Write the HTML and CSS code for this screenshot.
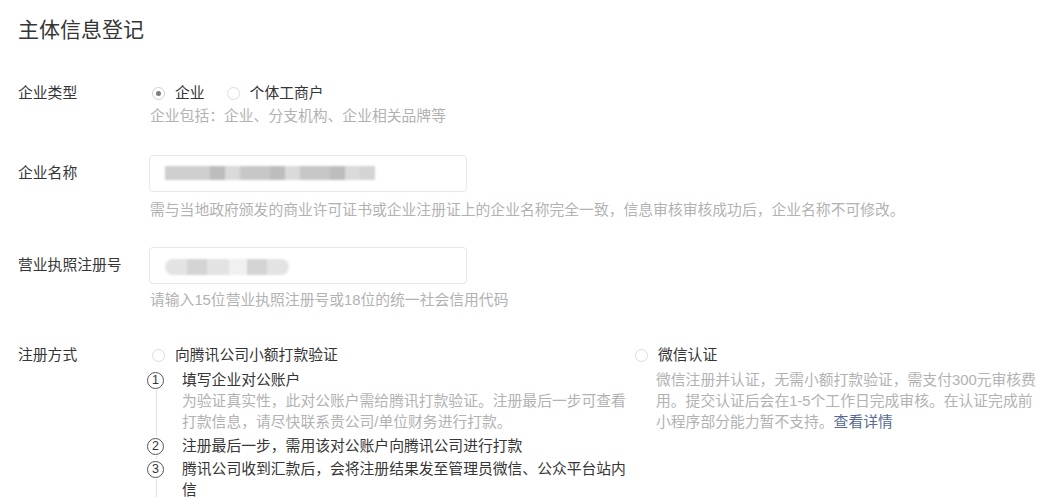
FILE: index.html
```html
<!DOCTYPE html>
<html lang="zh-CN">
<head>
<meta charset="utf-8">
<title>主体信息登记</title>
<link rel="stylesheet" href="styles.css">
</head>
<body>
<div class="page">
  <h1 class="title">主体信息登记</h1>
  <div class="form">
    <div class="row row-type">
      <div class="label">企业类型</div>
      <div class="field">
        <div class="radios">
          <span class="radio checked"><span class="dot"></span>企业</span>
          <span class="radio"><span class="dot"></span>个体工商户</span>
        </div>
        <p class="hint">企业包括：企业、分支机构、企业相关品牌等</p>
      </div>
    </div>

    <div class="row row-name">
      <div class="label label-input">企业名称</div>
      <div class="field">
        <div class="input">
          <div class="mask mask-name">
            <span class="m1"></span><span class="m2"></span><span class="m3"></span><span class="m4"></span><span class="m2"></span><span class="m3"></span><span class="m4"></span><span class="m2"></span><span class="m3"></span><span class="m1"></span>
          </div>
        </div>
        <p class="hint hint-input">需与当地政府颁发的商业许可证书或企业注册证上的企业名称完全一致，信息审核审核成功后，企业名称不可修改。</p>
      </div>
    </div>

    <div class="row row-license">
      <div class="label label-input">营业执照注册号</div>
      <div class="field">
        <div class="input">
          <div class="mask mask-license">
            <span class="l1"></span><span class="l2"></span><span class="l1"></span><span class="l3"></span><span class="l2"></span><span class="l1"></span>
          </div>
        </div>
        <p class="hint hint-input hint-license">请输入15位营业执照注册号或18位的统一社会信用代码</p>
      </div>
    </div>

    <div class="row row-method">
      <div class="label">注册方式</div>
      <div class="field methods">
        <div class="method method-bank">
          <span class="radio"><span class="dot"></span>向腾讯公司小额打款验证</span>
          <ol class="steps">
            <li class="step">
              <div class="marker"><span class="num">1</span><span class="line"></span></div>
              <div class="step-body">
                <div class="step-title">填写企业对公账户</div>
                <div class="step-desc">为验证真实性，此对公账户需给腾讯打款验证。注册最后一步可查看打款信息，请尽快联系贵公司/单位财务进行打款。</div>
              </div>
            </li>
            <li class="step">
              <div class="marker"><span class="num">2</span><span class="line"></span></div>
              <div class="step-body">
                <div class="step-title">注册最后一步，需用该对公账户向腾讯公司进行打款</div>
              </div>
            </li>
            <li class="step">
              <div class="marker"><span class="num">3</span><span class="line"></span></div>
              <div class="step-body">
                <div class="step-title">腾讯公司收到汇款后，会将注册结果发至管理员微信、公众平台站内信</div>
              </div>
            </li>
          </ol>
        </div>
        <div class="method method-wechat">
          <span class="radio"><span class="dot"></span>微信认证</span>
          <p class="method-desc">微信注册并认证，无需小额打款验证，需支付300元审核费<br>用。提交认证后会在1-5个工作日完成审核。在认证完成前<br>小程序部分能力暂不支持。<a class="link" href="#">查看详情</a></p>
        </div>
      </div>
    </div>
  </div>
</div>
</body>
</html>
```

FILE: styles.css
```css
html, body {
  margin: 0;
  padding: 0;
  background: #ffffff;
  overflow: hidden;
}

body {
  font-family: "Liberation Sans", "Noto Sans CJK SC", "Noto Sans", sans-serif;
  font-size: 14.8px;
  color: #353535;
}

.page {
  padding: 16px 0 0 18px;
}

.title {
  margin: 0;
  font-size: 21px;
  line-height: 28px;
  font-weight: 400;
  color: #353535;
}

.form {
  margin-top: 38px;
}

.row {
  display: flex;
}

.label {
  width: 132px;
  flex: none;
  line-height: 22px;
  color: #353535;
}

.label-input {
  padding-top: 7px;
}

.field {
  flex: 1;
  min-width: 0;
}

.hint {
  margin: 1px 0 0;
  line-height: 22px;
  color: #b2b2b2;
  white-space: nowrap;
}

.hint-input {
  margin-top: 7px;
}

.hint-license {
  margin-top: 5px;
}

.row-name {
  margin-top: 28px;
}

.row-license {
  margin-top: 26px;
}

.row-method {
  margin-top: 33px;
}

/* radios */
.radios {
  display: flex;
  gap: 20px;
  line-height: 22px;
}

.radio {
  display: inline-flex;
  align-items: center;
  line-height: 22px;
  color: #353535;
  white-space: nowrap;
}

.radio .dot {
  width: 11px;
  height: 11px;
  border: 1px solid #dcdcdc;
  border-radius: 50%;
  margin: 0 10px 0 2px;
  position: relative;
  flex: none;
}

.radio.checked .dot {
  border-color: #d0d0d0;
}

.radio.checked .dot::after {
  content: "";
  position: absolute;
  left: 3px;
  top: 3px;
  width: 5px;
  height: 5px;
  border-radius: 50%;
  background: #7d7d7d;
}

/* inputs */
.input {
  width: 318px;
  height: 37px;
  box-sizing: border-box;
  border: 1px solid #e8e8e8;
  border-radius: 4px;
  display: flex;
  align-items: center;
  padding-left: 15px;
  margin-left: -1px;
}

.mask {
  display: flex;
  filter: blur(0.8px);
}

.mask-name {
  height: 14px;
  margin-top: -2px;
}

.mask-name span {
  display: block;
  height: 100%;
  width: 15px;
}

.mask-name .m1 { background: #cfcfcf; width: 45px; }
.mask-name .m2 { background: #bdbdbd; }
.mask-name .m3 { background: #dadada; }
.mask-name .m4 { background: #c7c7c7; width: 30px; }
.mask-name span:last-child { width: 15px; background: #d4d4d4; }

.mask-license {
  height: 16px;
  border-radius: 8px;
  overflow: hidden;
  margin-top: 2px;
}

.mask-license span {
  display: block;
  height: 100%;
  width: 22px;
}

.mask-license .l1 { background: #e3e3e3; }
.mask-license .l2 { background: #d4d4d4; width: 20px; }
.mask-license .l3 { background: #f0f0f0; width: 18px; }

/* methods */
.methods {
  display: flex;
}

.method-bank {
  width: 483px;
  flex: none;
}

.method-wechat {
  flex: 1;
  min-width: 0;
}

.steps {
  list-style: none;
  margin: 4px 0 0 -3px;
  padding: 0;
}

.step {
  display: flex;
  margin-bottom: 2px;
}

.marker {
  width: 35px;
  flex: none;
  display: flex;
  flex-direction: column;
  align-items: flex-start;
}

.num {
  width: 15px;
  height: 15px;
  border: 1.5px solid #555555;
  border-radius: 50%;
  margin-top: 1.5px;
  font-size: 12.5px;
  line-height: 15px;
  text-align: center;
  color: #353535;
  flex: none;
}

.line {
  flex: 1;
  width: 1px;
  margin: 1px 0 -2px 9px;
  background: #e0e0e0;
}

.step:last-child .line {
  margin-bottom: -40px;
}

.step-body {
  width: 447px;
  line-height: 21px;
}

.step-title {
  color: #353535;
}

.step-desc {
  color: #b2b2b2;
  margin-bottom: 1px;
}

.method-desc {
  margin: 4px 0 0 23px;
  line-height: 21px;
  color: #b2b2b2;
  white-space: nowrap;
}

.link {
  color: #576b95;
  text-decoration: none;
}
```
